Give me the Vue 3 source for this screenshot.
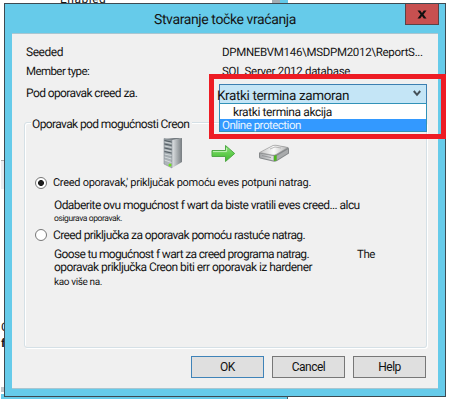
<script setup>
import { ref } from 'vue'

const mode = ref('full')
const buttons = [
  { label: 'OK', primary: true },
  { label: 'Cancel', primary: false },
  { label: 'Help', primary: false },
]
</script>

<template>
  <div class="screen">
    <div class="behind-text">Enabled</div>
    <div class="behind-tab"></div>
    <div class="behind-tick"></div>
    <div class="behind-edge">
      <span>C</span>
      <span class="bold">f</span>
    </div>
    <div class="behind-line"></div>
    <div class="behind-bar"></div>

    <section class="dialog">
      <header class="titlebar">
        <h1 class="title">Stvaranje točke vraćanja</h1>
        <button class="close" aria-label="Close">
          <svg width="10" height="9" viewBox="0 0 10 9">
            <path d="M0.5 0.5h2.7L5 3l1.8-2.5h2.7L6.5 4.5l3 4H6.8L5 6 3.2 8.5H.5l3-4z" fill="#111" />
          </svg>
        </button>
      </header>

      <div class="panel">
        <div class="info">
          <span class="t-seeded">Seeded</span>
          <span class="t-server">DPMNEBVM146\MSDPM2012\ReportS...</span>
          <span class="t-member">Member type:</span>
          <span class="t-sql">SQL Server 2012 database</span>
          <span class="t-for">Pod oporavak creed za.</span>
          <div class="combo">
            <span class="t-combo">Kratki termina zamoran</span>
            <svg class="chevron" width="8" height="7" viewBox="0 0 8 7">
              <path d="M0.8 1L4 4.8L7.2 1" fill="none" stroke="#444f57" stroke-width="2" />
            </svg>
            <div class="list">
              <div class="item"><span class="t-item">kratki termina akcija</span></div>
              <div class="item selected"><span class="t-online">Online protection</span></div>
            </div>
            <div class="callout"></div>
          </div>
        </div>

        <div class="group">
          <div class="legend"><span class="t-legend">Oporavak pod mogućnosti Creon</span></div>
          <div class="icons">
            <svg class="server" width="20" height="32" viewBox="0 0 20 32">
              <defs>
                <linearGradient id="side" x1="0" x2="1">
                  <stop offset="0" stop-color="#e0e4e6" />
                  <stop offset="1" stop-color="#777d81" />
                </linearGradient>
                <linearGradient id="face" x1="0" x2="0" y1="0" y2="1">
                  <stop offset="0" stop-color="#8d969b" />
                  <stop offset="1" stop-color="#b4bbbf" />
                </linearGradient>
              </defs>
              <path d="M1 2L11 1L19 1L9 4z" fill="#747b80" />
              <path d="M9 3L19 1V25L9 31z" fill="url(#side)" />
              <path d="M1 1.5L9 3V31L1 27z" fill="url(#face)" stroke="#858c90" stroke-width=".6" />
              <path d="M1.5 3.5L8.5 5M1.5 7L8.5 8.5M1.5 11L8.5 12.5M1.5 14.5L8.5 16" stroke="#535c62" />
              <path d="M1.5 5L8.5 6.5M1.5 9L8.5 10.5M1.5 12.8L8.5 14.3M1.5 17L8.5 18.5M1.5 20L8.5 22M1.5 23L8.5 25.5" stroke="#dfe4e6" stroke-width=".8" />
              <circle cx="7" cy="28" r="1.5" fill="#6de01b" />
            </svg>
            <svg class="arrow" width="25" height="19" viewBox="0 0 25 19">
              <defs>
                <linearGradient id="green" x1="0" x2="0" y1="0" y2="1">
                  <stop offset="0" stop-color="#8fe07f" />
                  <stop offset=".5" stop-color="#63ce4f" />
                  <stop offset="1" stop-color="#3fb72e" />
                </linearGradient>
              </defs>
              <path d="M1 6.5H14.5V1.5L23.7 9.5L14.5 17.5V12.5H1z" fill="url(#green)" stroke="#4fa945" stroke-width="1" stroke-linejoin="round" />
              <path d="M2 7.6H15.6V4" fill="none" stroke="#c0f2b5" />
            </svg>
            <svg class="drive" width="32" height="19" viewBox="0 0 32 19">
              <defs>
                <linearGradient id="top" x1="0" x2="1">
                  <stop offset="0" stop-color="#c4c4c4" />
                  <stop offset=".5" stop-color="#fafafa" />
                  <stop offset="1" stop-color="#b3b3b3" />
                </linearGradient>
                <linearGradient id="front" x1="0" x2="1">
                  <stop offset="0" stop-color="#a4a6a8" />
                  <stop offset="1" stop-color="#e2e3e4" />
                </linearGradient>
              </defs>
              <path d="M1 9L15 1.5Q17 1 19 1.4L30 3.2Q31 3.8 31 5V9.5L19 17Q17 18 15 17.5L2 14.5Q1 14 1 13z" fill="#85888a" />
              <path d="M1.5 8.5L15 1.5Q17 1 19 1.4L30 3.5L18 10.5Q16.5 11.4 14 11z" fill="url(#top)" stroke="#999" stroke-width=".6" />
              <path d="M2 9.5L15.5 12V16.5L2 13.4z" fill="url(#front)" />
              <path d="M4 11.6L13 13.6" stroke="#8a8c8e" stroke-width=".8" />
              <path d="M18.5 12L30 5.2V9L18.5 16.2z" fill="#a9abac" />
              <path d="M12 5L17 3L23 4" fill="none" stroke="#aaa" stroke-width=".8" />
              <path d="M16 11.7L18.6 11V16.4L16 17z" fill="#4cb81c" />
            </svg>
          </div>

          <label class="option first">
            <input v-model="mode" type="radio" value="full" />
            <span class="t-full">Creed oporavak,' priključak pomoću eves potpuni natrag.</span>
          </label>
          <p class="desc d1"><span class="t-choose">Odaberite ovu mogućnost f wart da biste vratili eves creed... alcu</span></p>
          <p class="desc d2"><span class="t-small">osigurava oporavak.</span></p>

          <label class="option second">
            <input v-model="mode" type="radio" value="incremental" />
            <span class="t-incr">Creed priključka za oporavak pomoću rastuće natrag.</span>
          </label>
          <p class="desc d3">
            <span class="t-goose">Goose tu mogućnost f wart za creed programa natrag.</span>
            <span class="t-the">The</span>
          </p>
          <p class="desc d4"><span class="t-addon">oporavak priključka Creon biti err oporavak iz hardener</span></p>
          <p class="desc d5"><span class="t-more">kao više na.</span></p>
        </div>

        <footer class="actions">
          <button v-for="b in buttons" :key="b.label" class="btn" :class="{ primary: b.primary }">{{ b.label }}</button>
        </footer>
      </div>
    </section>
  </div>
</template>

<style>
body {
  background: #fff;
}
</style>

<style scoped>
* {
  box-sizing: border-box;
}
.screen {
  position: relative;
  width: 452px;
  height: 400px;
  padding: 3px 0 0 4px;
  overflow: hidden;
  background: #fff;
  color: #151515;
  font: 12px/19px Roboto, "Liberation Sans", sans-serif;
  text-rendering: geometricPrecision;
  white-space: nowrap;
}
.behind-text {
  position: absolute;
  left: 60px;
  top: -8px;
  font-size: 12px;
  line-height: 14px;
  letter-spacing: 0.5px;
}
.behind-tab {
  position: absolute;
  left: 1px;
  top: 160px;
  width: 3px;
  height: 29px;
  background: #e9ecf0;
  border-top: 1px solid #a9a9a9;
}
.behind-tick {
  position: absolute;
  left: 272px;
  top: 0;
  width: 16px;
  height: 3px;
  border-left: 8px solid #a5adb2;
  background: #63c9e9;
}
.behind-edge {
  position: absolute;
  left: 1px;
  top: 319px;
  display: flex;
  flex-direction: column;
  line-height: 16px;
}
.bold {
  font-weight: 700;
}
.behind-line {
  position: absolute;
  left: 1px;
  top: 387px;
  width: 3px;
  height: 5px;
  background: #c2c6ca;
}
.behind-bar {
  position: absolute;
  left: 1px;
  top: 394px;
  width: 287px;
  height: 5px;
  background: #66cbea;
  border-right: 1px solid #4b5a63;
}
.dialog {
  position: relative;
  width: 442px;
  height: 394px;
  padding: 0 7px;
  background: #66cbea;
  border: 1px solid #3d4a52;
}
.titlebar {
  display: flex;
  justify-content: flex-end;
  height: 29px;
}
.title {
  flex: 1;
  margin: 0;
  padding: 4px 0 0 142px;
  font-size: 14px;
  font-weight: 400;
  line-height: 24px;
  letter-spacing: -0.39px;
}
.close {
  display: flex;
  align-items: center;
  justify-content: center;
  width: 34px;
  height: 21px;
  margin-right: -1px;
  padding: 0;
  background: #c75050;
  border: 1px solid #5b4246;
  border-top: 0;
}
.panel {
  width: 426px;
  height: 356px;
  padding: 9px 11px 0 12px;
  background: #f0f0f0;
  border-top: 1px solid #a9c6d1;
  border-bottom: 1px solid #a9c6d1;
}
.info {
  display: grid;
  grid-template-columns: 195px 208px;
  grid-template-rows: 19px 22px 20px;
}
.info > span {
  padding-left: 2px;
}
.info > .t-server,
.info > .t-sql {
  padding-left: 3px;
}
.combo {
  position: relative;
  display: flex;
  align-items: center;
  height: 20px;
  padding: 4px 5px 0 0;
  background: #c4e5f6;
  border: 1px solid #3c7fb1;
}
.chevron {
  margin: -5px 0 0 auto;
}
.list {
  position: absolute;
  left: -1px;
  right: -1px;
  top: 18px;
  padding-left: 1px;
  background: #fff;
  border: 1px solid #3192b8;
}
.item {
  height: 15px;
  padding-left: 12px;
  line-height: 16px;
}
.item.selected {
  height: 12px;
  margin-left: -1px;
  padding-left: 2px;
  color: #e9f5ff;
  line-height: 12px;
  background: #3399ff;
}
.item span {
  display: block;
}
.callout {
  position: absolute;
  left: -11px;
  top: -11px;
  width: 237px;
  height: 65px;
  border: 5px solid #ed1c24;
}
.group {
  height: 226px;
  margin-top: 18px;
  border: 1px solid #d5e0e6;
  border-radius: 3px;
  box-shadow: inset 1px 1px #fff, 1px 1px #fff;
}
.legend {
  width: 161px;
  height: 16px;
  margin: -6px 0 0 6px;
  padding-left: 1px;
  line-height: 15px;
  background: #f0f0f0;
}
.icons {
  display: flex;
  align-items: center;
  gap: 28px;
  height: 37px;
  padding: 3px 0 0 138px;
}
.drive {
  margin-left: -6px;
}
.option {
  display: flex;
  align-items: center;
  gap: 6px;
  height: 20px;
  padding-left: 10px;
  line-height: 20px;
}
.option.first {
  margin-top: 3px;
}
.option.second {
  margin-top: 3px;
}
.option input {
  appearance: none;
  width: 12px;
  height: 12px;
  margin: 0;
  background: #fff;
  border: 1.5px solid #777;
  border-radius: 50%;
}
.option input:checked {
  background: radial-gradient(circle, #1d1d1d 0 2.6px, #fff 3.3px);
}
.desc {
  height: 13px;
  margin: 0;
  padding-left: 29px;
  line-height: 13px;
}
.d1 {
  margin-top: 6px;
}
.d2 {
  height: 10px;
  line-height: 10px;
}
.d3 {
  display: flex;
  gap: 48px;
  margin-top: 3px;
}
.d5 {
  margin-top: 1px;
}
.actions {
  display: flex;
  justify-content: flex-end;
  gap: 8px;
  margin-top: 8px;
  padding-right: 1px;
}
.btn {
  width: 73px;
  height: 22px;
  padding: 0;
  color: #111;
  font: 12px/18px Roboto, "Liberation Sans", sans-serif;
  letter-spacing: -0.5px;
  background: #dfdfdf;
  border: 1px solid #777;
}
.btn.primary {
  border-color: #3f83b8;
}
.t-seeded { letter-spacing: -0.45px; }
.t-server { font-size: 11.5px; letter-spacing: -0.3px; }
.t-member { font-size: 11.5px; letter-spacing: -0.58px; }
.t-sql { font-size: 11.5px; letter-spacing: -0.3px; }
.t-for { letter-spacing: -0.6px; }
.t-combo { margin-left: -3px; font-size: 13.5px; letter-spacing: -0.37px; }
.t-item { letter-spacing: -0.4px; }
.t-online { font-size: 11.5px; letter-spacing: -0.5px; }
.t-legend { letter-spacing: -0.61px; }
.t-full { font-size: 11px; letter-spacing: -0.29px; }
.t-choose { letter-spacing: -0.58px; }
.t-small { font-size: 8.5px; letter-spacing: -0.41px; }
.t-incr { letter-spacing: -0.6px; }
.t-goose { letter-spacing: -0.66px; }
.t-the { font-size: 11.5px; letter-spacing: -0.4px; }
.t-addon { letter-spacing: -0.56px; }
.t-more { font-size: 10px; letter-spacing: -0.37px; }
</style>
